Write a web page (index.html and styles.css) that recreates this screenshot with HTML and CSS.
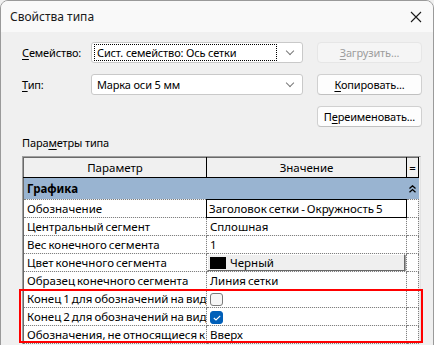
FILE: index.html
```html
<!DOCTYPE html>
<html lang="ru">
<head>
  <meta charset="UTF-8">
  <title>Свойства типа</title>
  <link rel="stylesheet" href="styles.css">
</head>
<body>
  <div class="window">
    <div class="titlebar">
      <span class="title">Свойства типа</span>
      <span class="close">
        <svg width="12" height="12" viewBox="0 0 12 12"><path d="M1 1L11 11M11 1L1 11" stroke="#1a1a1a" stroke-width="1.1" fill="none"/></svg>
      </span>
    </div>

    <div class="content">
      <div class="form-grid">
        <label class="lbl"><u>С</u>емейство:</label>
        <div class="combo"><span class="combo-text focused">Сист. семейство: Ось сетки</span><span class="chev"></span></div>
        <button class="btn" disabled><u>З</u>агрузить...</button>

        <label class="lbl"><u>Т</u>ип:</label>
        <div class="combo"><span class="combo-text">Марка оси 5 мм</span><span class="chev"></span></div>
        <button class="btn"><u>К</u>опировать...</button>

        <span></span>
        <span></span>
        <button class="btn">П<u>е</u>реименовать...</button>
      </div>

      <div class="section-label">Пара<u>м</u>етры типа</div>

      <div class="grid-wrap">
        <table class="props">
          <colgroup>
            <col class="c-name">
            <col class="c-value">
            <col class="c-eq">
          </colgroup>
          <thead>
            <tr>
              <th>Параметр</th>
              <th>Значение</th>
              <th>=</th>
            </tr>
          </thead>
          <tbody>
            <tr class="group">
              <td colspan="2">Графика</td>
              <td class="collapse">
                <svg width="7" height="8" viewBox="0 0 7 8"><path d="M0.5 3.5L3.5 0.8L6.5 3.5M0.5 7.2L3.5 4.5L6.5 7.2" stroke="#000" stroke-width="1.3" fill="none"/></svg>
              </td>
            </tr>
            <tr>
              <td>Обозначение</td>
              <td class="editing">Заголовок сетки - Окружность 5</td>
              <td></td>
            </tr>
            <tr>
              <td>Центральный сегмент</td>
              <td>Сплошная</td>
              <td></td>
            </tr>
            <tr>
              <td>Вес конечного сегмента</td>
              <td>1</td>
              <td></td>
            </tr>
            <tr>
              <td>Цвет конечного сегмента</td>
              <td class="color-cell"><span class="color-btn"><span class="swatch"></span>Черный</span></td>
              <td></td>
            </tr>
            <tr>
              <td>Образец конечного сегмента</td>
              <td>Линия сетки</td>
              <td></td>
            </tr>
            <tr>
              <td class="clip">Конец 1 для обозначений на виде в плане (по умолчанию)</td>
              <td><span class="check"></span></td>
              <td></td>
            </tr>
            <tr>
              <td class="clip">Конец 2 для обозначений на виде в плане (по умолчанию)</td>
              <td><span class="check on">
                <svg width="8" height="6" viewBox="0 0 8 6"><path d="M0.8 3L3 5L7.2 0.8" stroke="#fff" stroke-width="1.1" fill="none"/></svg>
              </span></td>
              <td></td>
            </tr>
            <tr>
              <td class="clip">Обозначения, не относящиеся к плану</td>
              <td>Вверх</td>
              <td></td>
            </tr>
          </tbody>
        </table>
        <div class="highlight"></div>
      </div>
    </div>
  </div>
</body>
</html>
```

FILE: styles.css
```css
html, body {
  margin: 0;
  padding: 0;
  background: #f0f0f0;
  overflow: hidden;
}
body {
  font-family: "Noto Sans", "Open Sans", sans-serif;
  font-size: 11px;
  letter-spacing: -0.15px;
  color: #000;
}
u {
  text-decoration: underline;
  text-underline-offset: 2px;
}
.window {
  width: 432px;
  height: 360px;
  border: 1px solid #9a9a9a;
  border-radius: 8px 8px 0 0;
  background: #f0f0f0;
  overflow: hidden;
}
.titlebar {
  height: 31px;
  background: #f9f9f9;
  display: flex;
  align-items: center;
  justify-content: space-between;
  padding: 0 10px 0 9px;
}
.title {
  font-size: 12px;
  letter-spacing: 0;
  color: #1a1a1a;
}
.close {
  display: flex;
  margin-right: 1px;
}
.content {
  padding: 10px 10px 0 21px;
}
.form-grid {
  display: grid;
  grid-template-columns: 55px 212px 105px;
  column-gap: 14px;
  grid-auto-rows: 21px;
  row-gap: 11px;
  align-items: center;
}
.lbl {
  color: #000;
  white-space: nowrap;
}
.combo {
  height: 19px;
  background: #fff;
  border: 1px solid #c9c9c9;
  border-radius: 3px;
  display: flex;
  align-items: center;
  justify-content: space-between;
  padding: 0 6px 0 2px;
}
.combo-text {
  padding: 0 2px;
  line-height: 15px;
  border: 1px solid transparent;
  flex: 1;
}
.combo-text.focused {
  border: 1px dotted #000;
}
.chev {
  width: 5px;
  height: 5px;
  border-right: 1px solid #7a7a7a;
  border-bottom: 1px solid #7a7a7a;
  transform: rotate(45deg);
  margin: 0 3px 4px 10px;
}
.btn {
  height: 21px;
  font-family: inherit;
  font-size: 11px;
  letter-spacing: -0.15px;
  color: #000;
  background: #fdfdfd;
  border: 1px solid #d0d0d0;
  border-bottom-color: #c0c0c0;
  border-radius: 4px;
  padding: 0;
}
.btn:disabled {
  color: #9d9d9d;
  background: #f5f5f5;
  border-color: #e6e6e6;
}
.section-label {
  margin-top: 7px;
  height: 18px;
  line-height: 18px;
}
.grid-wrap {
  position: relative;
  margin-top: 4px;
  width: 397px;
  border-top: 1px solid #a0a0a0;
  border-left: 1px solid #a0a0a0;
  border-right: 1px solid #e3e3e3;
}
.props {
  border-collapse: collapse;
  table-layout: fixed;
  width: 396px;
  border-left: 1px solid #696969;
  border-top: 1px solid #696969;
  font-size: 11.5px;
  letter-spacing: 0;
  word-spacing: -1px;
}
.c-name { width: 183px; }
.c-value { width: 200px; }
.c-eq { width: 12px; }
.props th {
  height: 19px;
  padding: 0;
  font-weight: normal;
  background: #f0f0f0;
  border: 1px solid #000;
  border-top: none;
  border-left: none;
  text-align: center;
}
.props th:last-child {
  border-right: 1px solid #000;
}
.props td {
  height: 17px;
  padding: 0 3px;
  background: #fff;
  border: 1px dotted #808080;
  white-space: nowrap;
  overflow: hidden;
}
.props td:first-child {
  border-left: none;
  padding-left: 3px;
}
.props td.clip {
  text-overflow: clip;
  padding-right: 0;
}
.props tr.group td {
  height: 21px;
  background: #99b4d1;
  font-weight: bold;
  border: none;
}
.props td.collapse {
  text-align: center;
  padding: 0;
}
.props td.collapse svg {
  display: block;
  margin: 0 auto;
}
.props td.editing {
  border: 1px solid #000;
  padding-left: 2px;
}
.props td.color-cell {
  padding: 0;
}
.color-btn {
  display: flex;
  align-items: center;
  height: 15px;
  background: #efefef;
  border: 1px solid;
  border-color: #fff #696969 #696969 #fff;
  box-shadow: 1px 1px 0 #a0a0a0;
  margin-right: 1px;
}
.swatch {
  width: 16px;
  height: 12px;
  background: #000;
  margin: 0 4px 0 2px;
}
.check {
  display: inline-flex;
  align-items: center;
  justify-content: center;
  width: 11px;
  height: 11px;
  border: 1px solid #7a7a7a;
  border-radius: 3px;
  background: #f6f6f6;
  vertical-align: middle;
}
.check.on {
  background: #005fb8;
  border-color: #005fb8;
}
.check svg {
  display: block;
}
.highlight {
  position: absolute;
  left: -4px;
  top: 132px;
  width: 400px;
  height: 50px;
  border: 2px solid #f00;
  pointer-events: none;
}
```
